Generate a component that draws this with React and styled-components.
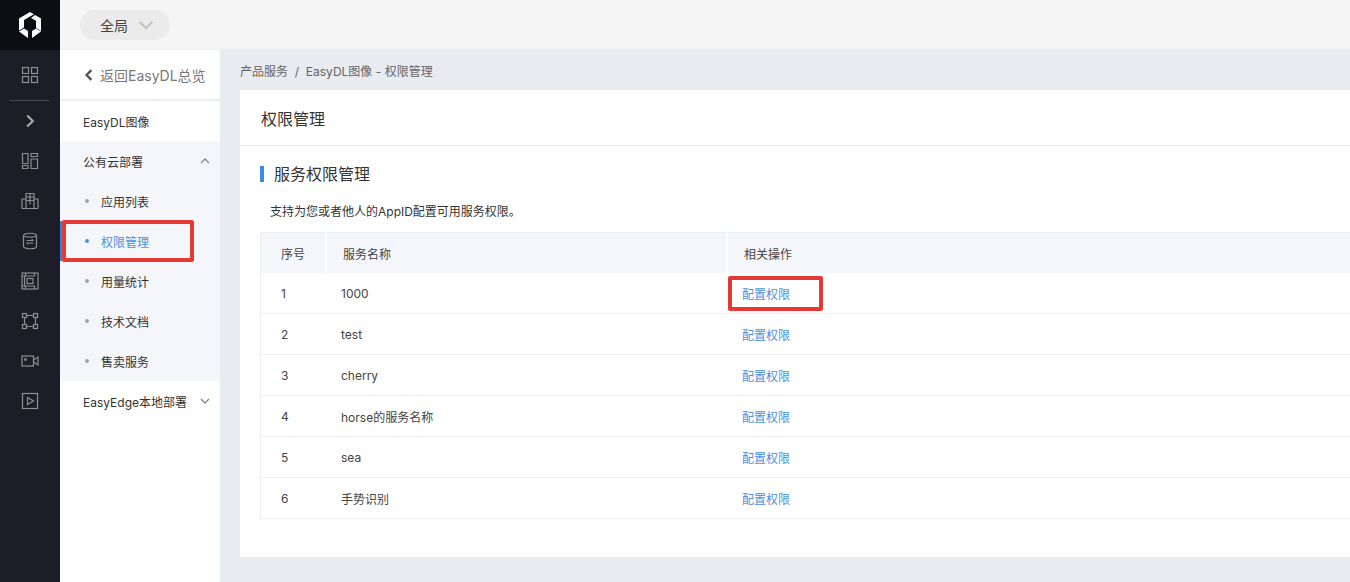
import React from "react";
import styled, { createGlobalStyle } from "styled-components";

const GlobalStyle = createGlobalStyle`
  html, body {
    margin: 0;
    padding: 0;
    height: 100%;
    overflow: hidden;
  }
  body {
    font-family: Inter, "Noto Sans CJK SC", sans-serif;
    font-size: 12px;
    color: #333;
  }
`;

const Page = styled.div`
  display: flex;
  width: 1350px;
  height: 582px;
  overflow: hidden;
`;

const Rail = styled.div`
  width: 60px;
  flex: none;
  display: flex;
  flex-direction: column;
  align-items: center;
  background-color: #1c1d27;
`;

const Logo = styled.div`
  width: 60px;
  height: 50px;
  display: flex;
  align-items: center;
  justify-content: center;
  background-color: #0d0e11;
`;

const RailButton = styled.div`
  width: 60px;
  height: 40px;
  flex: none;
  display: flex;
  align-items: center;
  justify-content: center;
  color: #8e8f94;
`;

const RailDivider = styled.div`
  width: 40px;
  height: 1px;
  flex: none;
  background-color: #44454f;
`;

const RailFirst = styled(RailButton)`
  height: 50px;
`;

const RailToggle = styled(RailButton)`
  height: 39px;
  margin-bottom: 1px;
`;

const Body = styled.div`
  flex: 1;
  min-width: 0;
  display: flex;
  flex-direction: column;
`;

const TopBar = styled.div`
  height: 50px;
  flex: none;
  display: flex;
  align-items: center;
  padding-left: 20px;
  box-sizing: border-box;
  background-color: #f5f5f5;
  border-bottom: 1px solid #eceef2;
`;

const ScopePill = styled.div`
  width: 90px;
  height: 30px;
  box-sizing: border-box;
  padding-left: 20px;
  display: flex;
  align-items: center;
  gap: 10px;
  border-radius: 15px;
  background-color: #ebebeb;
  font-size: 14px;
  color: #444;
`;

const Columns = styled.div`
  flex: 1;
  display: flex;
  min-height: 0;
`;

const Sidebar = styled.div`
  position: relative;
  width: 160px;
  flex: none;
  background-color: #fff;
`;

const BackLink = styled.div`
  height: 51px;
  box-sizing: border-box;
  padding-left: 23px;
  display: flex;
  align-items: center;
  gap: 5px;
  font-size: 14px;
  color: #777;
  border-bottom: 2px solid #eceef3;
`;

const MenuItem = styled.div`
  height: 40px;
  padding: 0 10px 0 23px;
  display: flex;
  align-items: center;
  justify-content: space-between;
  color: #333;
`;

const MenuGroup = styled.div`
  background-color: #f5f6fa;
`;

const SubItem = styled.div`
  height: 40px;
  box-sizing: border-box;
  display: flex;
  align-items: center;
  gap: 12px;
  padding-left: 25px;
  color: ${(props) => (props.$active ? "#4a90e2" : "#333")};
  border-left: ${(props) => (props.$active ? "2px solid #2f80e8" : "none")};
  padding-left: ${(props) => (props.$active ? "23px" : "25px")};
`;

const Dot = styled.span`
  width: 4px;
  height: 4px;
  border-radius: 50%;
  background-color: ${(props) => (props.$active ? "#4a90e2" : "#a5a5a5")};
`;

const Main = styled.div`
  flex: 1;
  min-width: 0;
  background-color: #e8ebf0;
  padding-left: 20px;
  display: flex;
  flex-direction: column;
`;

const Crumbs = styled.div`
  height: 40px;
  flex: none;
  display: flex;
  align-items: center;
  color: #666;
  white-space: pre;
`;

const Card = styled.div`
  position: relative;
  width: 1130px;
  height: 467px;
  flex: none;
  background-color: #fff;
`;

const CardHead = styled.div`
  height: 56px;
  box-sizing: border-box;
  padding-left: 21px;
  display: flex;
  align-items: center;
  font-size: 16px;
  color: #333;
  border-bottom: 1px solid #e8e8ec;
`;

const CardBody = styled.div`
  padding: 20px 0 0 20px;
`;

const SectionTitle = styled.div`
  height: 16px;
  line-height: 16px;
  margin-top: 0;
  padding-left: 10px;
  font-size: 16px;
  color: #333;
  border-left: 4px solid #3c8ce7;
`;

const Description = styled.div`
  margin-top: 21px;
  padding-left: 10px;
  height: 18px;
  line-height: 18px;
  color: #333;
`;

const Table = styled.div`
  margin-top: 11px;
  width: 1110px;
  border: 1px solid #eceef4;
  border-bottom: none;
`;

const HeadRow = styled.div`
  display: grid;
  grid-template-columns: 64px 401px 1fr;
  height: 40px;
  background-color: #f5f6fa;
`;

const HeadCell = styled.div`
  display: flex;
  align-items: center;
  padding-left: ${(props) => props.$inset || "16px"};
  color: #444;
  border-left: ${(props) => (props.$first ? "none" : "2px solid #fff")};
`;

const Row = styled.div`
  display: grid;
  grid-template-columns: 64px 401px 1fr;
  height: 41px;
  box-sizing: border-box;
  border-bottom: 1px solid #eceef4;
`;

const Cell = styled.div`
  display: flex;
  align-items: center;
  padding-left: ${(props) => props.$inset || "16px"};
  color: #444;
`;

const ActionLink = styled.a`
  color: #4a90e2;
  cursor: pointer;
`;

const Highlight = styled.div`
  position: absolute;
  box-sizing: border-box;
  left: ${(props) => props.$x}px;
  top: ${(props) => props.$y}px;
  width: ${(props) => props.$w}px;
  height: ${(props) => props.$h}px;
  border: 4px solid #e53935;
  border-radius: 2px;
  pointer-events: none;
`;

const Icon = ({ children, size = 18 }) => (
  <svg width={size} height={size} viewBox="0 0 18 18" fill="none" stroke="currentColor" strokeWidth="1.2">
    {children}
  </svg>
);

const railIcons = [
  <>
    <rect x="1.5" y="1.5" width="6" height="6" />
    <rect x="10.5" y="1.5" width="6" height="6" />
    <rect x="1.5" y="10.5" width="6" height="6" />
    <rect x="10.5" y="10.5" width="6" height="6" />
  </>,
  <>
    <path d="M1.5 1.5h5.5v10H1.5z" />
    <path d="M1.5 13.5h5.5v3H1.5z" />
    <path d="M10 1.5h6.5v3H10z" />
    <path d="M10 7h6.5v9.5H10z" />
  </>,
  <>
    <path d="M5 16.5V1.5h8v15" />
    <path d="M1 16.5V7h4M13 7h4v9.5" />
    <path d="M1 16.5h16M5 5h8M5 8.5h8M9 1.5v11" />
  </>,
  <>
    <path d="M2.5 3.5c0-3 13-3 13 0v11c0 3-13 3-13 0z" />
    <path d="M2.5 3.5c0 2 13 2 13 0" />
    <path d="M5.5 8.5h7l-2-1.5M12.5 11h-7l2 1.5" strokeWidth="1" />
  </>,
  <>
    <rect x="1" y="1" width="16" height="16" />
    <path d="M4.5 1v3h9V1M4.5 17v-3h9v3M1 4h2.5v10H1" />
    <rect x="6" y="6.5" width="6" height="5" />
  </>,
  <>
    <rect x="1.5" y="1.5" width="4" height="4" />
    <rect x="12.5" y="1.5" width="4" height="4" />
    <rect x="1.5" y="12.5" width="4" height="4" />
    <rect x="12.5" y="12.5" width="4" height="4" />
    <path d="M5.5 3.5h7M5.5 14.5h7M3.5 5.5v7M14.5 5.5v7" />
  </>,
  <>
    <rect x="1" y="4" width="11.5" height="10" />
    <path d="M12.5 8l4.5-3v8l-4.5-3" />
    <circle cx="4.5" cy="7.5" r="0.8" />
  </>,
  <>
    <rect x="1.5" y="1.5" width="15" height="15" />
    <path d="M6.5 5.5l6 3.5-6 3.5z" />
  </>,
];

const Chevron = ({ direction, color = "#8a8a8a", size = 10, width = 1.4 }) => {
  const paths = {
    up: "M1 7l4-4 4 4",
    down: "M1 3l4 4 4-4",
    left: "M7 1L3 5l4 4",
    right: "M3 1l4 4-4 4",
  };
  return (
    <svg width={size} height={size} viewBox="0 0 10 10" fill="none" stroke={color} strokeWidth={width}>
      <path d={paths[direction]} />
    </svg>
  );
};

const rows = [
  ["1", "1000"],
  ["2", "test"],
  ["3", "cherry"],
  ["4", "horse的服务名称"],
  ["5", "sea"],
  ["6", "手势识别"],
];

const subItems = ["应用列表", "权限管理", "用量统计", "技术文档", "售卖服务"];

export default function App() {
  return (
    <Page>
      <GlobalStyle />
      <Rail>
        <Logo>
          <svg width="26" height="28" viewBox="0 0 26 28" fill="#fff">
            <path d="M13 1l4 2.3-4 2.3-6 3.4v7.5l-5 3V7.5z" />
            <path d="M17.5 3.7L24 7.5v12.5l-5-3V9.5l-5.5-3.2z" opacity="0" />
            <path d="M18 4l6 3.5V20l-5-3V9.8l-5-2.8z" />
            <path d="M2 20.6l5-3 4 2.3v7.2zM24 20.6l-5-3-4 2.3v7.2z" />
          </svg>
        </Logo>
        <RailFirst>
          <Icon>{railIcons[0]}</Icon>
        </RailFirst>
        <RailDivider />
        <RailToggle>
          <Chevron direction="right" color="#a9aaae" size={14} width={1.5} />
        </RailToggle>
        {railIcons.slice(1).map((icon, index) => (
          <RailButton key={index}>
            <Icon>{icon}</Icon>
          </RailButton>
        ))}
      </Rail>
      <Body>
        <TopBar>
          <ScopePill>
            全局
            <Chevron direction="down" color="#c4c4c4" size={16} width={1.3} />
          </ScopePill>
        </TopBar>
        <Columns>
          <Sidebar>
            <BackLink>
              <Chevron direction="left" color="#555" size={12} width={2} />
              返回EasyDL总览
            </BackLink>
            <MenuItem>EasyDL图像</MenuItem>
            <MenuGroup>
              <MenuItem>
                公有云部署
                <Chevron direction="up" />
              </MenuItem>
              {subItems.map((item) => (
                <SubItem key={item} $active={item === "权限管理"}>
                  <Dot $active={item === "权限管理"} />
                  {item}
                </SubItem>
              ))}
            </MenuGroup>
            <MenuItem>
              EasyEdge本地部署
              <Chevron direction="down" />
            </MenuItem>
            <Highlight $x={2} $y={170} $w={132} $h={42} />
          </Sidebar>
          <Main>
            <Crumbs>产品服务  /  EasyDL图像 - 权限管理</Crumbs>
            <Card>
              <CardHead>权限管理</CardHead>
              <CardBody>
                <SectionTitle>服务权限管理</SectionTitle>
                <Description>支持为您或者他人的AppID配置可用服务权限。</Description>
                <Table>
                  <HeadRow>
                    <HeadCell $first $inset="20px">序号</HeadCell>
                    <HeadCell>服务名称</HeadCell>
                    <HeadCell>相关操作</HeadCell>
                  </HeadRow>
                  {rows.map(([no, name]) => (
                    <Row key={no}>
                      <Cell $inset="20px">{no}</Cell>
                      <Cell>{name}</Cell>
                      <Cell>
                        <ActionLink>配置权限</ActionLink>
                      </Cell>
                    </Row>
                  ))}
                </Table>
              </CardBody>
              <Highlight $x={488} $y={186} $w={95} $h={35} />
            </Card>
          </Main>
        </Columns>
      </Body>
    </Page>
  );
}
